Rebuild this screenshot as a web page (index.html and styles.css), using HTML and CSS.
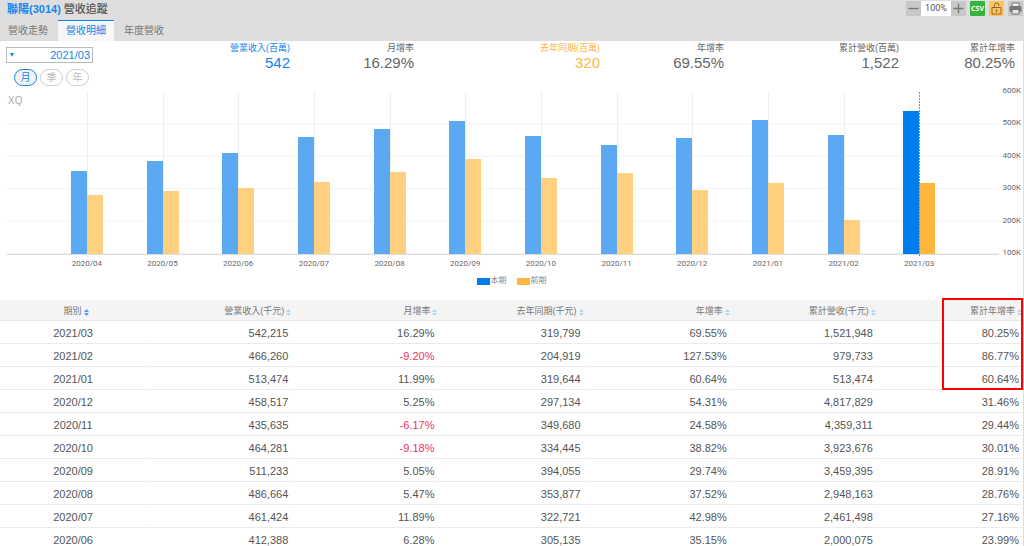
FILE: index.html
```html
<!DOCTYPE html>
<html lang="zh-Hant">
<head>
<meta charset="utf-8">
<meta name="viewport" content="width=device-width, initial-scale=1">
<title>聯陽(3014) 營收追蹤</title>
<link rel="stylesheet" href="styles.css">
</head>
<body>
<svg class="defs" aria-hidden="true">
  <symbol id="sort" viewBox="0 0 5 7"><path class="up" d="M2.500 0 5 3H0z"/><path class="down" d="M2.500 7 5 4H0z"/></symbol>
</svg>
<div class="page">
<header class="header">
  <div class="title-row">
    <h1 class="title"><a class="stock" href="#">聯陽(3014)</a> 營收追蹤</h1>
    <div class="toolbar">
      <div class="zoom">
        <button class="tool" type="button" aria-label="縮小"><svg viewBox="0 0 15 15"><path d="M2.500 7.500h10" stroke="#777" stroke-width="1.300"/></svg></button>
        <input class="zoom-value" type="text" value="100%" aria-label="縮放比例">
        <button class="tool" type="button" aria-label="放大"><svg viewBox="0 0 15 15"><path d="M2.500 7.500h10M7.500 2.500v10" stroke="#777" stroke-width="1.300"/></svg></button>
      </div>
      <button class="tool csv" type="button">CSV</button>
      <button class="tool lock" type="button" aria-label="鎖定"><svg viewBox="0 0 15 15" fill="none" stroke="#8a6a2c"><path d="M3 6.500h9v6.500H3z"/><path d="M5.500 6.500V4.200a2.200 2.200 0 0 1 4.400 0V5"/><path d="M7.500 8.500v2.600" stroke-width="1.300"/></svg></button>
      <button class="tool" type="button" aria-label="列印"><svg viewBox="0 0 15 15"><path d="M4 5V2h7v3" fill="#eee" stroke="#777"/><rect x="1.500" y="5" width="12" height="6" rx="1.500" fill="#777"/><path d="M4 8.500h7V13H4z" fill="#e4e4e4" stroke="#777"/></svg></button>
    </div>
  </div>
  <nav class="tabs">
    <a class="tab" href="#">營收走勢</a>
    <a class="tab active" href="#" aria-current="page">營收明細</a>
    <a class="tab" href="#">年度營收</a>
  </nav>
</header>
<main class="content">
  <section class="summary">
    <div class="controls">
      <div class="period"><select class="period-select" aria-label="期別"><option>2021/03</option></select></div>
      <div class="pills">
        <button class="pill selected" type="button">月</button>
        <button class="pill" type="button">季</button>
        <button class="pill" type="button">年</button>
      </div>
    </div>
    <dl class="figures">
      <div class="figure blue"><dt>營業收入(百萬)</dt><dd>542</dd></div>
      <div class="figure"><dt>月增率</dt><dd>16.29%</dd></div>
      <div class="figure orange"><dt>去年同期(百萬)</dt><dd>320</dd></div>
      <div class="figure"><dt>年增率</dt><dd>69.55%</dd></div>
      <div class="figure"><dt>累計營收(百萬)</dt><dd>1,522</dd></div>
      <div class="figure"><dt>累計年增率</dt><dd>80.25%</dd></div>
    </dl>
  </section>
  <section class="chart">
    <span class="watermark">XQ</span>
    <div class="plot-side">
      <div class="plot">
        <div class="group"><i class="bar now" style="height:51.2%"></i><i class="bar prev" style="height:36.2%"></i></div>
        <div class="group"><i class="bar now" style="height:57.5%"></i><i class="bar prev" style="height:38.7%"></i></div>
        <div class="group"><i class="bar now" style="height:62.5%"></i><i class="bar prev" style="height:41.0%"></i></div>
        <div class="group"><i class="bar now" style="height:72.3%"></i><i class="bar prev" style="height:44.5%"></i></div>
        <div class="group"><i class="bar now" style="height:77.3%"></i><i class="bar prev" style="height:50.8%"></i></div>
        <div class="group"><i class="bar now" style="height:82.2%"></i><i class="bar prev" style="height:58.8%"></i></div>
        <div class="group"><i class="bar now" style="height:72.9%"></i><i class="bar prev" style="height:46.9%"></i></div>
        <div class="group"><i class="bar now" style="height:67.1%"></i><i class="bar prev" style="height:49.9%"></i></div>
        <div class="group"><i class="bar now" style="height:71.7%"></i><i class="bar prev" style="height:39.4%"></i></div>
        <div class="group"><i class="bar now" style="height:82.7%"></i><i class="bar prev" style="height:43.9%"></i></div>
        <div class="group"><i class="bar now" style="height:73.3%"></i><i class="bar prev" style="height:21.0%"></i></div>
        <div class="group current"><i class="bar now" style="height:88.4%"></i><i class="bar prev" style="height:44.0%"></i></div>
      </div>
      <div class="x-axis">
        <span>2020/04</span><span>2020/05</span><span>2020/06</span><span>2020/07</span><span>2020/08</span><span>2020/09</span><span>2020/10</span><span>2020/11</span><span>2020/12</span><span>2021/01</span><span>2021/02</span><span>2021/03</span>
      </div>
    </div>
    <div class="y-axis"><span>600K</span><span>500K</span><span>400K</span><span>300K</span><span>200K</span><span>100K</span></div>
  </section>
  <div class="legend">
    <span class="key"><i class="swatch now"></i>本期</span>
    <span class="key"><i class="swatch prev"></i>前期</span>
  </div>
  <table class="table">
    <thead>
      <tr>
        <th><button class="sort sorted" type="button">期別<svg><use href="#sort"/></svg></button></th>
        <th><button class="sort" type="button">營業收入(千元)<svg><use href="#sort"/></svg></button></th>
        <th><button class="sort" type="button">月增率<svg><use href="#sort"/></svg></button></th>
        <th><button class="sort" type="button">去年同期(千元)<svg><use href="#sort"/></svg></button></th>
        <th><button class="sort" type="button">年增率<svg><use href="#sort"/></svg></button></th>
        <th><button class="sort" type="button">累計營收(千元)<svg><use href="#sort"/></svg></button></th>
        <th class="marked"><button class="sort" type="button">累計年增率<svg><use href="#sort"/></svg></button><span class="marker"></span></th>
      </tr>
    </thead>
    <tbody>
      <tr><td>2021/03</td><td>542,215</td><td>16.29%</td><td>319,799</td><td>69.55%</td><td>1,521,948</td><td>80.25%</td></tr>
      <tr><td>2021/02</td><td>466,260</td><td class="down">-9.20%</td><td>204,919</td><td>127.53%</td><td>979,733</td><td>86.77%</td></tr>
      <tr><td>2021/01</td><td>513,474</td><td>11.99%</td><td>319,644</td><td>60.64%</td><td>513,474</td><td>60.64%</td></tr>
      <tr><td>2020/12</td><td>458,517</td><td>5.25%</td><td>297,134</td><td>54.31%</td><td>4,817,829</td><td>31.46%</td></tr>
      <tr><td>2020/11</td><td>435,635</td><td class="down">-6.17%</td><td>349,680</td><td>24.58%</td><td>4,359,311</td><td>29.44%</td></tr>
      <tr><td>2020/10</td><td>464,281</td><td class="down">-9.18%</td><td>334,445</td><td>38.82%</td><td>3,923,676</td><td>30.01%</td></tr>
      <tr><td>2020/09</td><td>511,233</td><td>5.05%</td><td>394,055</td><td>29.74%</td><td>3,459,395</td><td>28.91%</td></tr>
      <tr><td>2020/08</td><td>486,664</td><td>5.47%</td><td>353,877</td><td>37.52%</td><td>2,948,163</td><td>28.76%</td></tr>
      <tr><td>2020/07</td><td>461,424</td><td>11.89%</td><td>322,721</td><td>42.98%</td><td>2,461,498</td><td>27.16%</td></tr>
      <tr><td>2020/06</td><td>412,388</td><td>6.28%</td><td>305,135</td><td>35.15%</td><td>2,000,075</td><td>23.99%</td></tr>
    </tbody>
  </table>
</main>
</div>
</body>
</html>
```
FILE: styles.css
```css
* { box-sizing: border-box; }

body {
  margin: 0;
  background: #fff;
  color: #555;
  font: 11px/14px "Liberation Sans", "Noto Sans CJK TC", sans-serif;
}

button, input, select {
  margin: 0;
  padding: 0;
  border: 0;
  background: none;
  color: inherit;
  font: inherit;
}

a { color: inherit; text-decoration: none; }

.defs { position: absolute; width: 0; height: 0; }

.page {
  display: flex;
  flex-direction: column;
  height: 100vh;
  overflow: hidden;
}

/* header */
.header { background: #dedede; flex: none; }

.title-row {
  display: flex;
  justify-content: space-between;
  align-items: center;
  height: 20px;
  padding: 0 1px 3px 7px;
}

.title { margin: 0; font-size: 11px; line-height: 16px; font-weight: 500; }
.stock { color: #1585ee; font-weight: 700; }

.toolbar { display: flex; gap: 4px; }
.zoom { display: flex; }

.tool {
  display: flex;
  align-items: center;
  justify-content: center;
  width: 15px;
  height: 15px;
  background: #c8c8c8;
}
.tool svg { width: 15px; height: 15px; fill: none; }
.tool.csv { background: #38b43a; color: #fff; font: 700 7px/15px "Noto Sans", sans-serif; border-radius: 1px; }
.tool.lock { background: #ffc25c; border-radius: 1px; }

.zoom-value {
  width: 30px;
  height: 15px;
  background: #fff;
  text-align: center;
  font: 9px/15px Roboto, sans-serif;
}

.tabs { display: flex; gap: 2px; height: 21px; }

.tab {
  padding: 0 8px;
  border-top: 1px solid transparent;
  color: #777;
  font-size: 10px;
  line-height: 20px;
}
.tab.active { background: #f7f7f7; border-color: #1585ee; color: #1585ee; }

/* summary */
.content { flex: 1; border-right: 1px solid #ddd; }

.summary { display: flex; height: 45px; }

.controls { width: 155px; padding: 6px 0 0 6px; }

.period { position: relative; width: 87px; }
.period::before {
  content: "";
  position: absolute;
  left: 4px;
  top: 6px;
  border: 2px solid transparent;
  border-top: 4px solid #1585ee;
  border-bottom: 0;
}

.period-select {
  display: block;
  width: 100%;
  height: 16px;
  padding-right: 2px;
  border: 1px solid #bbb;
  color: #1585ee;
  appearance: none;
  text-align-last: right;
}

.pills { display: flex; gap: 3px; padding: 6px 0 0 8px; }

.pill {
  width: 23px;
  height: 17px;
  border: 1px solid #ccc;
  border-radius: 9px;
  color: #bbb;
  font-size: 10px;
  line-height: 14px;
}
.pill.selected { border-color: #1585ee; background: #f3f3f3; color: #1585ee; }

.figures {
  flex: 1;
  display: grid;
  grid-template-columns: 135fr 124fr 186fr 124fr 175fr 116fr;
  margin: 0;
  padding-right: 8px;
}
.figure { text-align: right; color: #666; }
.figure dt { font-size: 9px; line-height: 14px; }
.figure dd { margin: 0; font-size: 15px; line-height: 16px; }
.figure.blue { color: #1585ee; }
.figure.orange { color: #ffb548; }

/* chart */
.chart {
  position: relative;
  display: flex;
  color: #666;
  font: 8px/12px Roboto, "Liberation Sans", sans-serif;
}

.watermark {
  position: absolute;
  left: 8px;
  top: 9px;
  color: #aaa;
  font-family: "Liberation Sans", sans-serif;
  font-size: 10px;
}

.plot-side { flex: 1; padding: 6px 2px 0 7px; }

.plot {
  display: flex;
  height: 163px;
  padding: 0 42px;
  border-bottom: 1px solid #ddd;
  background: linear-gradient(to top, #f2f2f2 1px, transparent 1px) 0 0 / 100% 20%;
}

.group {
  position: relative;
  flex: 1;
  display: flex;
  justify-content: center;
  align-items: flex-end;
}
.group::before {
  content: "";
  position: absolute;
  left: 50%;
  top: 0;
  bottom: -3px;
  border-left: 1px solid #eee;
}
.group.current::before {
  z-index: 1;
  border-left: 0;
  width: 1px;
  background: repeating-linear-gradient(#8c8c98 0 2px, transparent 2px 3px);
}

.bar { position: relative; width: 16px; }
.bar.now { background: #5ba9f3; }
.bar.prev { background: #ffd080; }
.current .now, .swatch.now { background: #007ded; }
.current .prev, .swatch.prev { background: #ffb63e; }

.x-axis { display: flex; padding: 3px 42px 0; }
.x-axis span { flex: 1; text-align: center; }

.y-axis {
  display: flex;
  flex-direction: column;
  justify-content: space-between;
  width: 22px;
  height: 174px;
  margin-top: -1px;
  text-align: right;
  padding-right: 2px;
}

.legend {
  display: flex;
  justify-content: center;
  gap: 10px;
  padding: 5px 0 13px;
  color: #888;
  font-size: 8px;
  line-height: 12px;
}
.key { display: flex; align-items: center; gap: 1px; }
.swatch { width: 13px; height: 7px; }

/* table */
.table {
  width: 100%;
  border-spacing: 0;
  table-layout: fixed;
  text-align: right;
}

th {
  height: 21px;
  padding: 0 1px 0 0;
  border-bottom: 1px solid #e9e9e9;
  background: #f4f4f4;
  font-weight: 400;
  text-align: right;
}
th:first-child { padding-left: 7px; text-align: center; }

.sort {
  display: inline-flex;
  align-items: center;
  gap: 2px;
  color: #777;
  font-size: 9px;
  line-height: 12px;
  vertical-align: middle;
}
.sort svg { width: 5px; height: 7px; margin-top: 2px; fill: #b4d6ec; }
.sort.sorted .up, .sort.sorted svg { fill: #4b9fdb; }

td {
  height: 23px;
  padding: 0 4px 0 0;
  background: linear-gradient(#ebebeb, #ebebeb) 0 100% / calc(100% - 1px) 1px no-repeat;
}
td:first-child { padding: 0; text-align: center; }
td.down { color: #f0325a; }

.marked { position: relative; }
.marker {
  position: absolute;
  top: -2px;
  right: 0;
  width: 81px;
  height: 92px;
  border: 2px solid #f00;
  pointer-events: none;
}
```
